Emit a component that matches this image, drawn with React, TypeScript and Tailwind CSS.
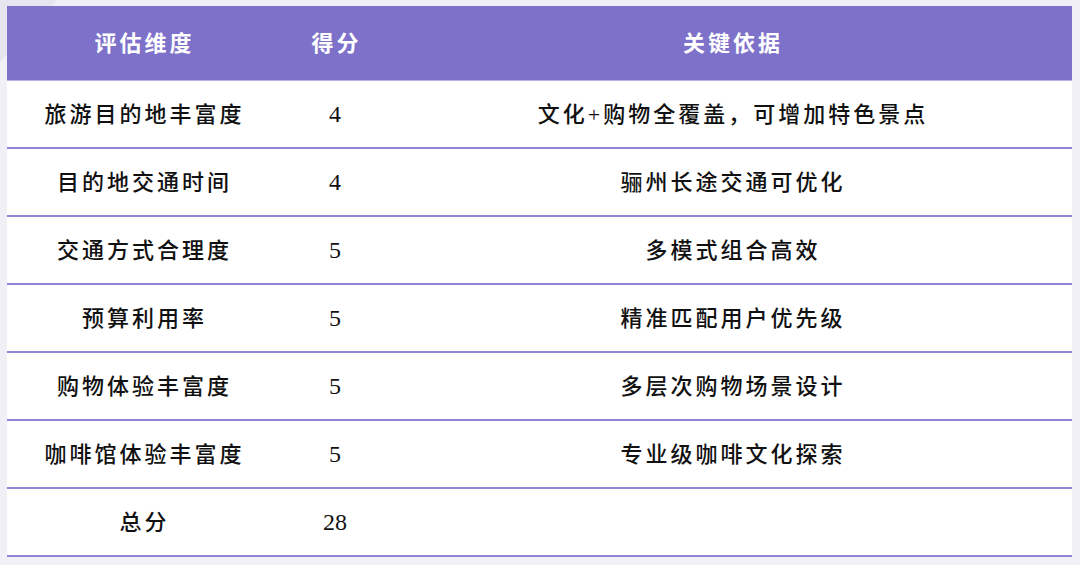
import React from "react";

const rows: [string, string, string][] = [
  ["旅游目的地丰富度", "4", "文化+购物全覆盖，可增加特色景点"],
  ["目的地交通时间", "4", "骊州长途交通可优化"],
  ["交通方式合理度", "5", "多模式组合高效"],
  ["预算利用率", "5", "精准匹配用户优先级"],
  ["购物体验丰富度", "5", "多层次购物场景设计"],
  ["咖啡馆体验丰富度", "5", "专业级咖啡文化探索"],
  ["总分", "28", ""],
];

export default function App() {
  return (
    <div
      className="relative w-[1080px] h-[565px] overflow-hidden bg-[#f1f0f7] pt-[6px] pl-[7px]"
      style={{ fontFamily: '"Liberation Serif", "Noto Sans CJK SC", serif' }}
    >
      <svg className="absolute left-0 top-0" width="80" height="80" viewBox="0 0 80 80">
        <polygon points="0,0 57,0 0,62" fill="#e7e5f0" />
      </svg>
      <div className="relative w-[1065px] bg-white">
        <div className="flex h-[75px] bg-[#7e71c9] border-b border-[#b9b1e6] text-white text-[22px] font-bold tracking-[3px]">
          <div className="w-[272px] flex items-center justify-center pl-[3px]">评估维度</div>
          <div className="w-[112px] flex items-center justify-center pl-[3px]">得分</div>
          <div className="flex-1 flex items-center justify-center pl-[3px]">关键依据</div>
        </div>
        {rows.map((r, i) => (
          <div
            key={i}
            className="flex h-[68px] border-b-2 border-[#8e84d8] text-[#111] text-[22px] font-medium tracking-[3px]"
          >
            <div className="w-[272px] flex items-center justify-center pl-[3px]">{r[0]}</div>
            <div className="w-[112px] flex items-center justify-center text-[24px] tracking-normal">{r[1]}</div>
            <div className="flex-1 flex items-center justify-center pl-[3px]">{r[2]}</div>
          </div>
        ))}
      </div>
    </div>
  );
}
